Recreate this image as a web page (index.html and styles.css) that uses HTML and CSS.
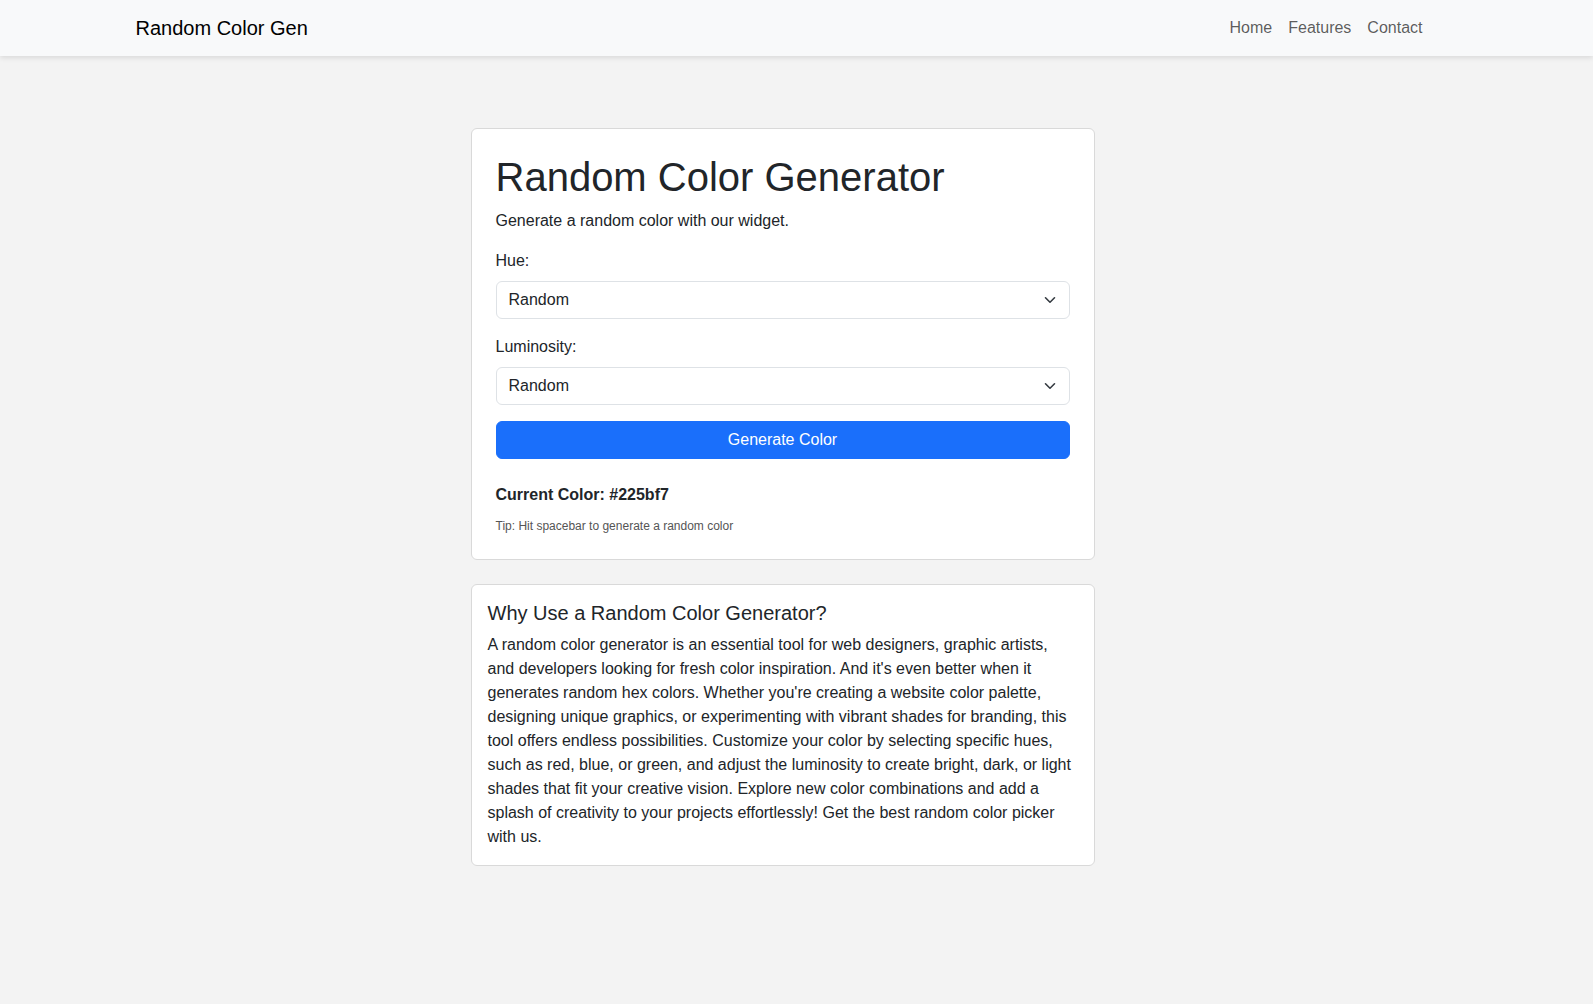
FILE: index.html
```html
<!DOCTYPE html>
<html lang="en">
<head>
<meta charset="utf-8">
<title>Random Color Generator</title>
<link rel="stylesheet" href="styles.css">
</head>
<body>
<nav class="navbar">
  <div class="container nav-inner">
    <a class="brand" href="#">Random Color Gen</a>
    <ul class="nav-links">
      <li><a href="#">Home</a></li>
      <li><a href="#">Features</a></li>
      <li><a href="#">Contact</a></li>
    </ul>
  </div>
</nav>
<main class="container main">
  <section class="card card-lg">
    <h1 class="title">Random Color Generator</h1>
    <p class="lead">Generate a random color with our widget.</p>
    <div class="field">
      <label class="label" for="hue">Hue:</label>
      <div class="select-wrap">
        <select id="hue" class="select">
          <option>Random</option>
          <option>Red</option>
          <option>Orange</option>
          <option>Yellow</option>
          <option>Green</option>
          <option>Blue</option>
          <option>Purple</option>
          <option>Pink</option>
          <option>Monochrome</option>
        </select>
        <svg class="chevron" viewBox="0 0 12 8" width="12" height="8"><path fill="none" stroke="#343a40" stroke-linecap="round" stroke-linejoin="round" stroke-width="1.6" d="M1.5 1.8 6 6.2 10.5 1.8"/></svg>
      </div>
    </div>
    <div class="field">
      <label class="label" for="lum">Luminosity:</label>
      <div class="select-wrap">
        <select id="lum" class="select">
          <option>Random</option>
          <option>Bright</option>
          <option>Light</option>
          <option>Dark</option>
        </select>
        <svg class="chevron" viewBox="0 0 12 8" width="12" height="8"><path fill="none" stroke="#343a40" stroke-linecap="round" stroke-linejoin="round" stroke-width="1.6" d="M1.5 1.8 6 6.2 10.5 1.8"/></svg>
      </div>
    </div>
    <button class="btn" type="button">Generate Color</button>
    <p class="current">Current Color: #225bf7</p>
    <p class="tip">Tip: Hit spacebar to generate a random color</p>
  </section>
  <section class="card card-sm">
    <h2 class="subtitle">Why Use a Random Color Generator?</h2>
    <p class="body-text">A random color generator is an essential tool for web designers, graphic artists, and developers looking for fresh color inspiration. And it's even better when it generates random hex colors. Whether you're creating a website color palette, designing unique graphics, or experimenting with vibrant shades for branding, this tool offers endless possibilities. Customize your color by selecting specific hues, such as red, blue, or green, and adjust the luminosity to create bright, dark, or light shades that fit your creative vision. Explore new color combinations and add a splash of creativity to your projects effortlessly! Get the best random color picker with us.</p>
  </section>
</main>
</body>
</html>
```

FILE: styles.css
```css
* { box-sizing: border-box; }

html, body {
  margin: 0;
  padding: 0;
}

body {
  background: #f3f3f3;
  color: #212529;
  font-family: "Liberation Sans", Arial, Helvetica, sans-serif;
  font-size: 16px;
  line-height: 1.5;
}

.container {
  box-sizing: content-box;
  width: 1296px;
  margin: 0 auto;
  padding: 0 39px 0 11px;
}

/* Navbar */
.navbar {
  background: #f8f9fa;
  box-shadow: 0 2px 5px rgba(0, 0, 0, 0.1);
  padding: 8px 0;
}

.nav-inner {
  display: flex;
  align-items: center;
  justify-content: space-between;
}

.brand {
  color: #000;
  text-decoration: none;
  font-size: 20px;
  line-height: 30px;
  padding: 5px 0 5px 1px;
}

.nav-links {
  display: flex;
  list-style: none;
  margin: 0;
  padding: 0;
}

.nav-links a {
  display: block;
  padding: 8px;
  color: rgba(0, 0, 0, 0.65);
  text-decoration: none;
  line-height: 24px;
}

/* Main */
.main {
  padding-top: 72px;
  padding-bottom: 40px;
  display: flex;
  flex-direction: column;
  align-items: center;
}

.card {
  width: 624px;
  background: #fff;
  border: 1px solid #d9d9d9;
  border-radius: 6px;
}

.card-lg {
  padding: 24px;
  margin-bottom: 24px;
}

.card-sm {
  padding: 16px;
}

.title {
  margin: 0 0 8px;
  font-size: 40px;
  font-weight: 400;
  line-height: 48px;
  color: #212529;
}

.lead {
  margin: 0 0 16px;
}

.field {
  margin-bottom: 16px;
}

.label {
  display: block;
  margin-bottom: 8px;
  line-height: 24px;
}

.select-wrap {
  position: relative;
}

.select {
  display: block;
  width: 100%;
  height: 38px;
  padding: 6px 36px 6px 12px;
  font-family: inherit;
  font-size: 16px;
  line-height: 24px;
  color: #212529;
  background: #fff;
  border: 1px solid #dee2e6;
  border-radius: 6px;
  appearance: none;
  -webkit-appearance: none;
}

.chevron {
  position: absolute;
  right: 14px;
  top: 15px;
  width: 12px;
  height: 8px;
  pointer-events: none;
}

.btn {
  display: block;
  width: 100%;
  height: 38px;
  padding: 6px 12px;
  font-family: inherit;
  font-size: 16px;
  line-height: 24px;
  color: #fff;
  background: #1a6ffb;
  border: 1px solid #1a6ffb;
  border-radius: 6px;
  cursor: pointer;
}

.current {
  margin: 24px 0 10px;
  font-weight: 700;
  line-height: 24px;
}

.tip {
  margin: 0;
  font-size: 12px;
  line-height: 18px;
  color: #555;
}

.subtitle {
  margin: 0 0 8px;
  font-size: 20px;
  font-weight: 400;
  line-height: 24px;
  color: #212529;
}

.body-text {
  margin: 0;
  line-height: 24px;
}
```
